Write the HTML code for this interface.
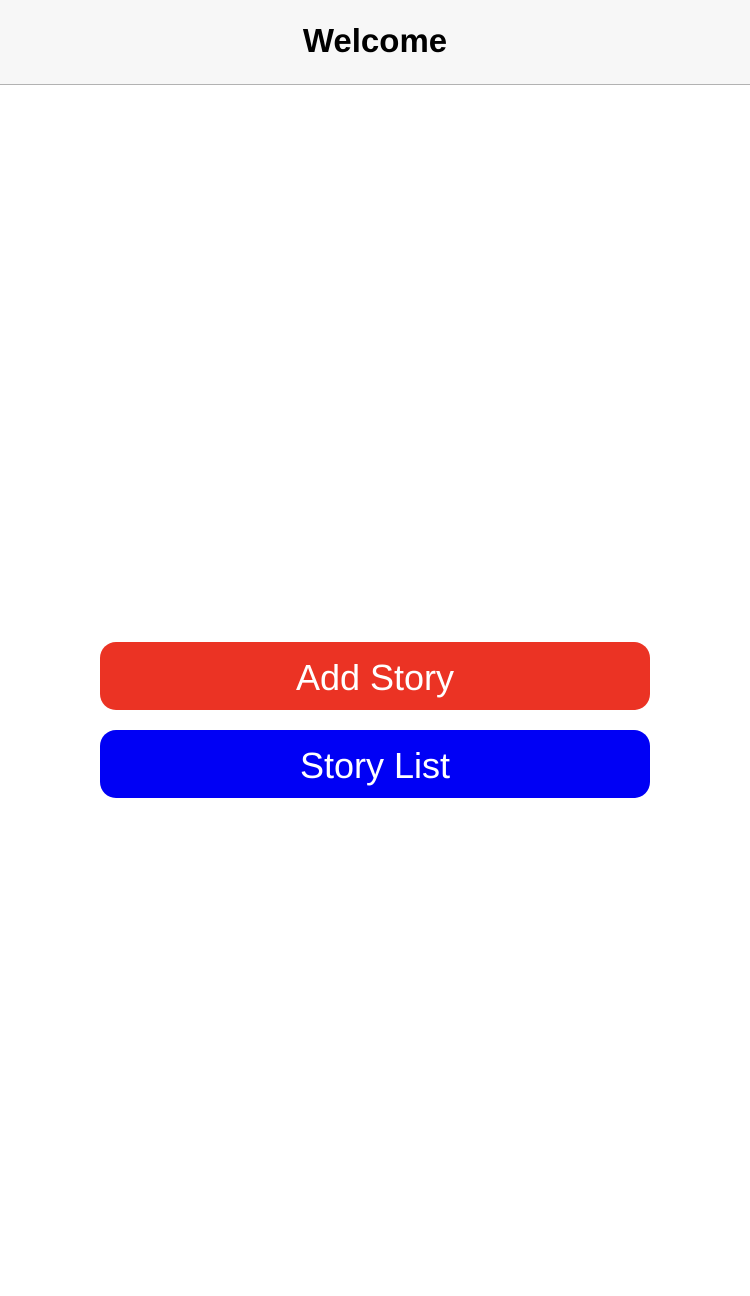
<!DOCTYPE html>
<html><head><style>
html,body{margin:0;padding:0;width:750px;height:1296px;background:#fff;font-family:"Liberation Sans",sans-serif;overflow:hidden}
.nav{position:absolute;top:0;left:0;width:750px;height:85px;background:#f7f7f7;border-bottom:1px solid #b2b2b2;box-sizing:border-box}
.nav div{position:absolute;top:0;left:0;width:750px;line-height:82px;text-align:center;font-size:33px;font-weight:bold;color:#000}
.btn{position:absolute;left:100px;width:550px;height:68px;border-radius:16px;color:#fff;text-align:center;line-height:72px;font-size:36px}
</style></head><body>
<div class="nav"><div>Welcome</div></div>
<div class="btn" style="top:642px;background:#eb3324">Add Story</div>
<div class="btn" style="top:730px;background:#0000f5">Story List</div>
</body></html>
